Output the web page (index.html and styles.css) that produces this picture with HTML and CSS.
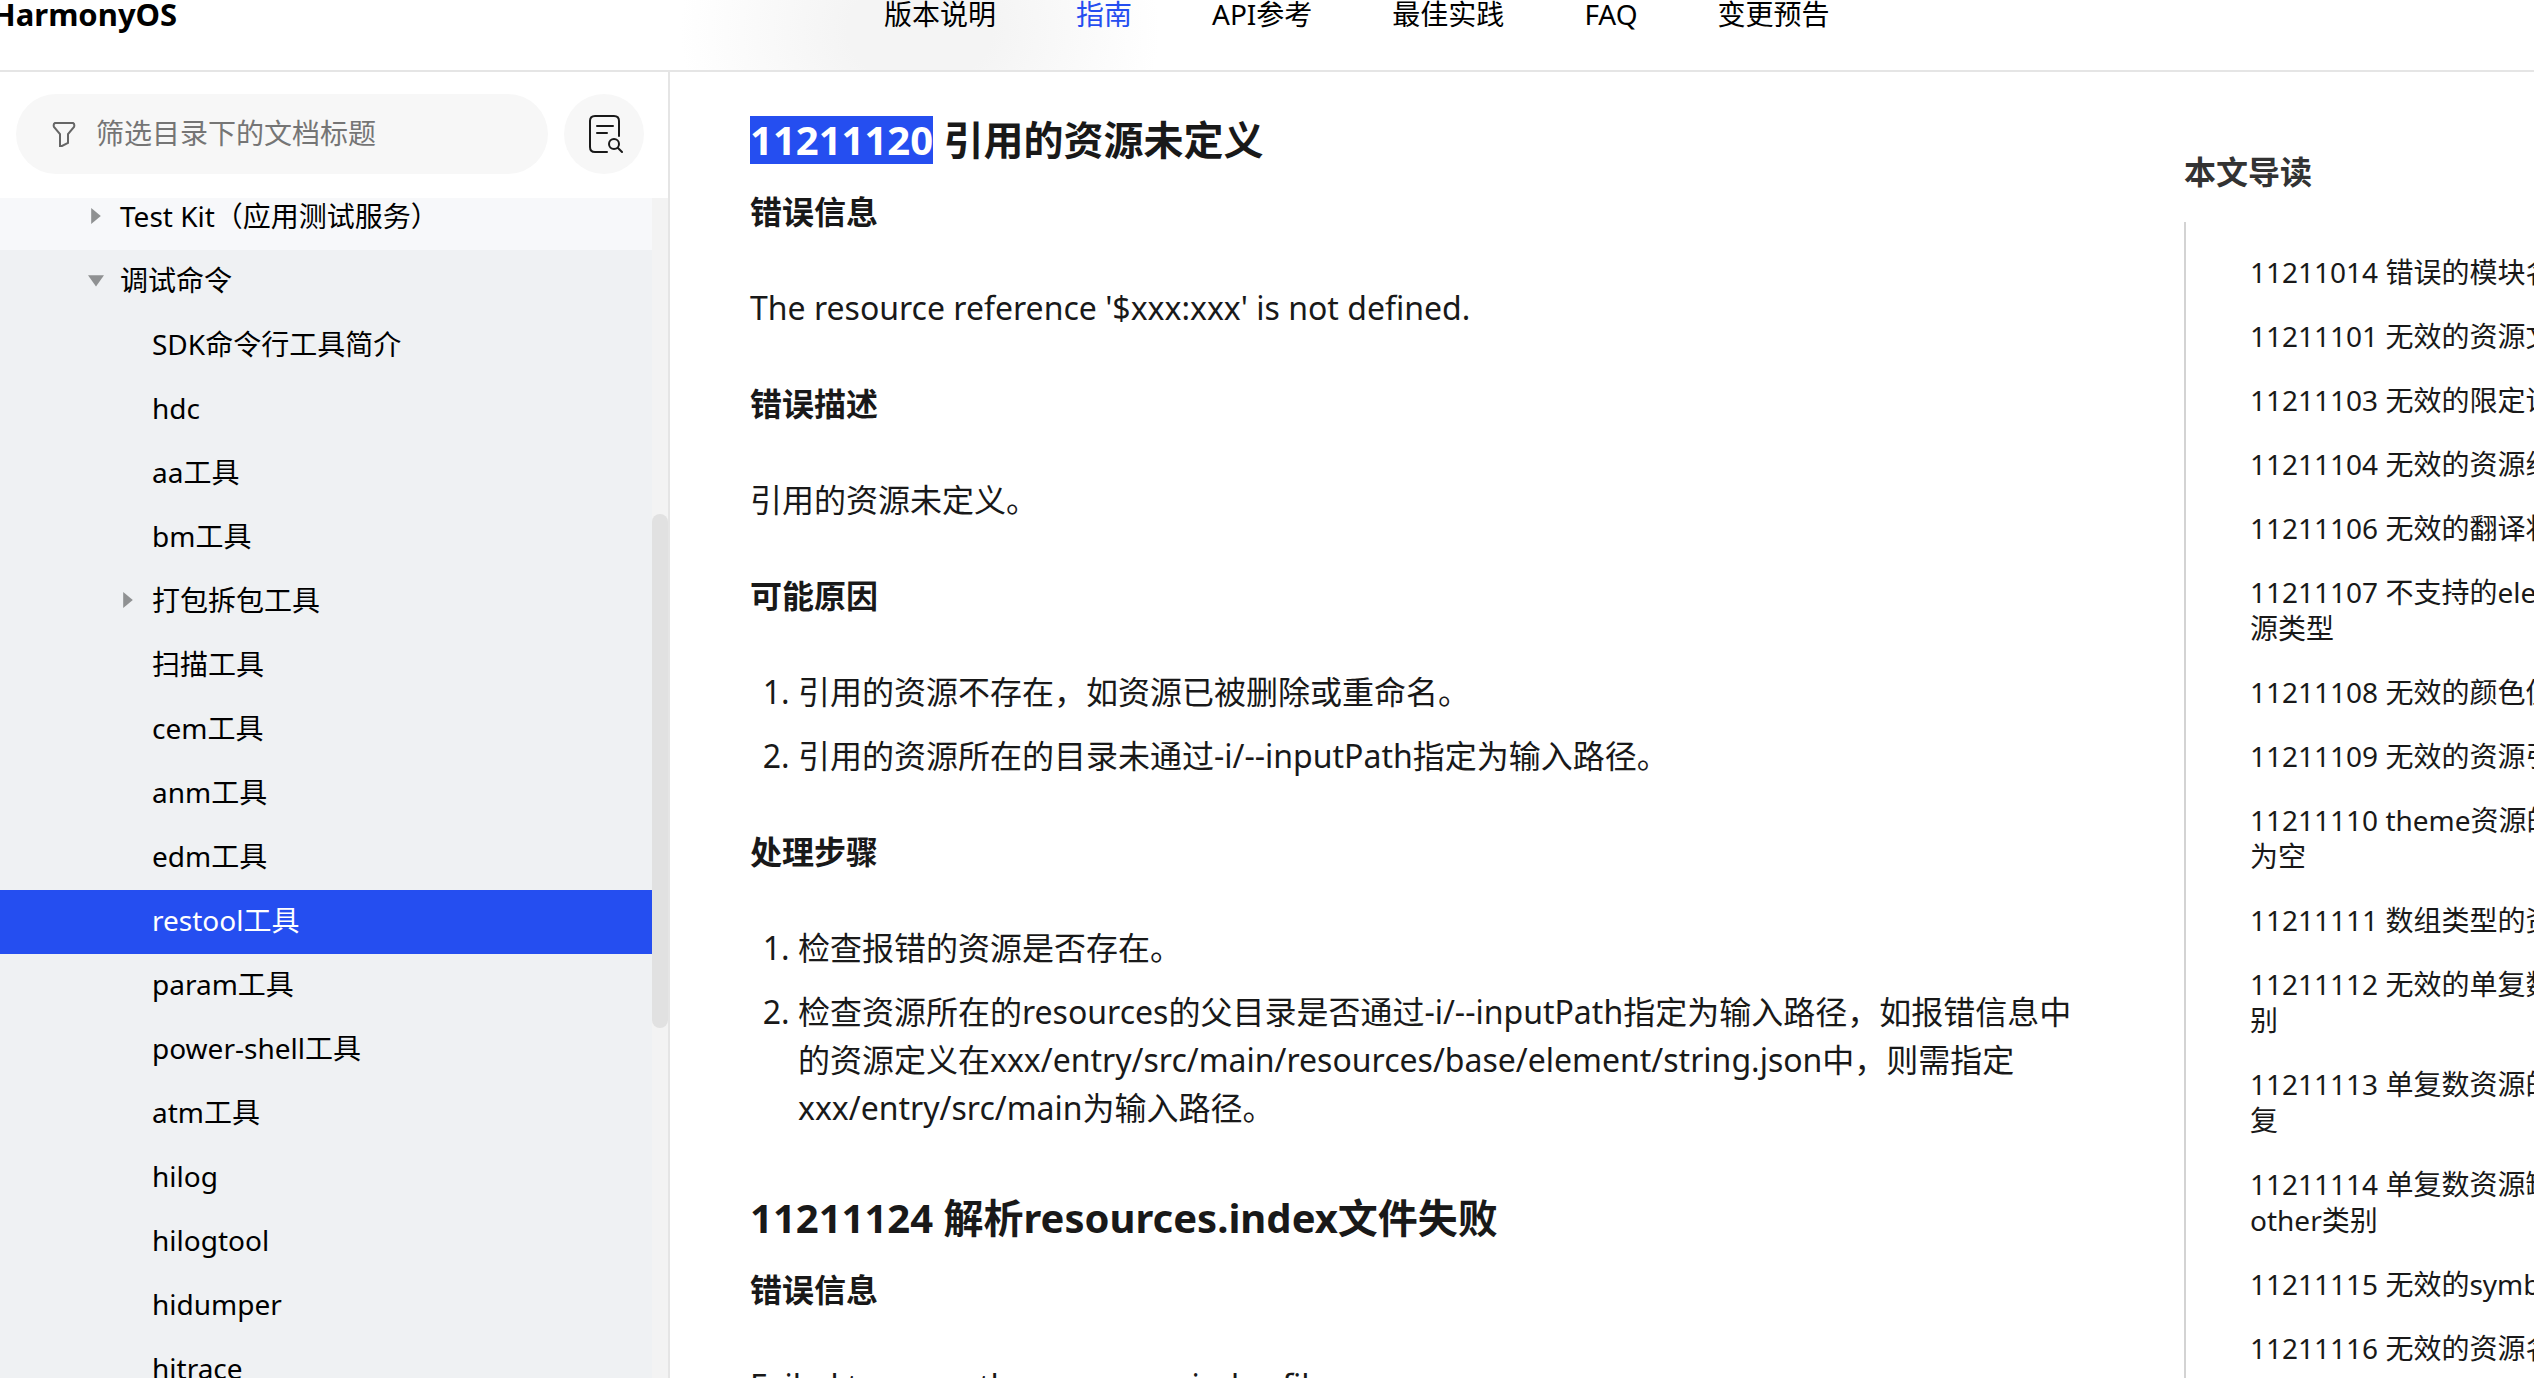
FILE: index.html
```html
<!DOCTYPE html>
<html lang="zh-CN">
<head>
<meta charset="utf-8">
<title>restool工具 - HarmonyOS</title>
<link rel="stylesheet" href="styles.css">
</head>
<body>
<header class="topbar">
  <a class="brand" href="#">HarmonyOS</a>
  <nav class="topnav">
    <a href="#">版本说明</a>
    <a class="active" href="#">指南</a>
    <a href="#">API参考</a>
    <a href="#">最佳实践</a>
    <a href="#">FAQ</a>
    <a href="#">变更预告</a>
  </nav>
</header>
<div class="layout">
  <aside class="sidebar">
    <div class="tools">
      <label class="filter">
        <svg class="funnel" viewBox="0 0 24 26" aria-hidden="true"><path d="M3 2h18q2 1 1 4l-6 7v9l-6 3h-2v-12l-6-7q-1-3 1-4z"/></svg>
        <input type="text" placeholder="筛选目录下的文档标题" aria-label="筛选目录下的文档标题">
      </label>
      <button class="doc-search" type="button" aria-label="搜索文档">
        <svg viewBox="0 0 36 40" aria-hidden="true"><path d="M20 38H8q-5 0-5-5V7q0-5 5-5h19q5 0 5 5v15M10 12h16M10 19h10"/><circle cx="27" cy="30" r="5"/><path d="M31 34l4 4"/></svg>
      </button>
    </div>
    <div class="tree-area">
      <ul class="tree">
        <li class="level-1 parent first"><span class="arrow right"></span><a href="#">Test Kit（应用测试服务）</a></li>
        <li class="level-1"><span class="arrow down"></span><a href="#">调试命令</a></li>
        <li><a href="#">SDK命令行工具简介</a></li>
        <li><a href="#">hdc</a></li>
        <li><a href="#">aa工具</a></li>
        <li><a href="#">bm工具</a></li>
        <li><span class="arrow right"></span><a href="#">打包拆包工具</a></li>
        <li><a href="#">扫描工具</a></li>
        <li><a href="#">cem工具</a></li>
        <li><a href="#">anm工具</a></li>
        <li><a href="#">edm工具</a></li>
        <li class="current"><a href="#">restool工具</a></li>
        <li><a href="#">param工具</a></li>
        <li><a href="#">power-shell工具</a></li>
        <li><a href="#">atm工具</a></li>
        <li><a href="#">hilog</a></li>
        <li><a href="#">hilogtool</a></li>
        <li><a href="#">hidumper</a></li>
        <li><a href="#">hitrace</a></li>
      </ul>
      <div class="track"><div class="thumb"></div></div>
    </div>
  </aside>
  <main class="article">
    <section>
      <h2><mark>11211120</mark> 引用的资源未定义</h2>
      <h3>错误信息</h3>
      <p>The resource reference '$xxx:xxx' is not defined.</p>
      <h3>错误描述</h3>
      <p>引用的资源未定义。</p>
      <h3>可能原因</h3>
      <ol>
        <li>引用的资源不存在，如资源已被删除或重命名。</li>
        <li>引用的资源所在的目录未通过-i/--inputPath指定为输入路径。</li>
      </ol>
      <h3>处理步骤</h3>
      <ol>
        <li>检查报错的资源是否存在。</li>
        <li>检查资源所在的resources的父目录是否通过-i/--inputPath指定为输入路径，如报错信息中的资源定义在xxx/entry/src/main/resources/base/element/string.json中，则需指定xxx/entry/src/main为输入路径。</li>
      </ol>
    </section>
    <section>
      <h2>11211124 解析resources.index文件失败</h2>
      <h3>错误信息</h3>
      <p>Failed to parse the resources.index file.</p>
    </section>
  </main>
  <aside class="toc">
    <h4>本文导读</h4>
    <ul>
      <li><a href="#">11211014 错误的模块名</a></li>
      <li><a href="#">11211101 无效的资源文</a></li>
      <li><a href="#">11211103 无效的限定词</a></li>
      <li><a href="#">11211104 无效的资源组</a></li>
      <li><a href="#">11211106 无效的翻译状</a></li>
      <li><a href="#">11211107 不支持的ele<br>源类型</a></li>
      <li><a href="#">11211108 无效的颜色值</a></li>
      <li><a href="#">11211109 无效的资源引</a></li>
      <li><a href="#">11211110 theme资源的<br>为空</a></li>
      <li><a href="#">11211111 数组类型的资</a></li>
      <li><a href="#">11211112 无效的单复数<br>别</a></li>
      <li><a href="#">11211113 单复数资源的<br>复</a></li>
      <li><a href="#">11211114 单复数资源缺<br>other类别</a></li>
      <li><a href="#">11211115 无效的symb</a></li>
      <li><a href="#">11211116 无效的资源名</a></li>
    </ul>
  </aside>
</div>
</body>
</html>
```
FILE: styles.css
```css
* { box-sizing: border-box; }
body {
  margin: 0;
  height: 100vh;
  display: flex;
  flex-direction: column;
  overflow: hidden;
  background: #fff;
  color: #191919;
  font: 28px/36px "Noto Sans", "Noto Sans CJK SC", sans-serif;
}
a { color: inherit; text-decoration: none; }
ul, ol { margin: 0; padding: 0; }
ul { list-style: none; }

.topbar {
  flex: none;
  height: 72px;
  display: flex;
  align-items: flex-start;
  border-bottom: 2px solid #e5e5e5;
  background: radial-gradient(ellipse 240px 180px at 920px 30px, #f4f4f4 30%, #fff 100%);
  color: #000;
  white-space: nowrap;
}
.brand { width: 892px; margin: -4px 0 0 -8px; font-size: 31px; font-weight: 700; }
.topnav { display: flex; gap: 80px; margin-top: -4px; }
.topnav .active { color: #254ef0; }

.layout { flex: 1; min-height: 0; display: flex; }
.sidebar {
  flex: none;
  width: 670px;
  display: flex;
  flex-direction: column;
  border-right: 2px solid #e5e5e5;
}
.tools { flex: none; display: flex; gap: 16px; padding: 22px 24px 24px 16px; }
.filter {
  flex: 1;
  height: 80px;
  display: flex;
  align-items: center;
  gap: 20px;
  padding: 0 36px;
  border-radius: 40px;
  background: #f7f7f7;
}
.funnel { flex: none; width: 24px; height: 26px; fill: none; stroke: #666; stroke-width: 2; }
.filter input {
  flex: 1;
  min-width: 0;
  padding: 0 0 2px;
  border: 0;
  outline: 0;
  background: none;
  color: #191919;
  font: inherit;
}
.filter input::placeholder { color: #757575; opacity: 1; }
.doc-search {
  width: 80px;
  height: 80px;
  display: grid;
  place-items: center;
  padding: 0 0 0 2px;
  border: 0;
  border-radius: 50%;
  background: #f7f7f7;
}
.doc-search svg { width: 36px; height: 40px; fill: none; stroke: #191919; stroke-width: 2; stroke-linecap: round; }

.tree-area { flex: 1; min-height: 0; display: flex; }
.tree { flex: 1; overflow: hidden; background: #eff1f3; color: #000; }
.tree li { height: 64px; display: flex; align-items: center; padding: 0 0 4px 120px; }
.tree li a { flex: 1; order: 2; margin-left: 32px; }
.tree li .arrow { order: 1; width: 16px; margin-right: -16px; }
.tree .level-1 { padding-left: 88px; }
.tree .first { height: 52px; padding-bottom: 16px; background: #f7f8fa; }
.tree .current { background: #254ef0; color: #fff; }
.arrow { height: 16px; background: #8f9192; }
.arrow.right { clip-path: polygon(20% 0, 80% 50%, 20% 100%); }
.arrow.down { clip-path: polygon(0 20%, 100% 20%, 50% 90%); }
.track { flex: none; width: 16px; padding-top: 316px; background: #f3f3f3; }
.thumb { height: 514px; border-radius: 8px; background: #e1e1e1; }

.article { flex: 1; min-width: 0; padding: 44px 100px 0 80px; overflow: hidden; font-size: 32px; line-height: 48px; }
.article h2 { margin: 0; font-size: 40px; line-height: 48px; font-weight: 700; }
.article h3 { margin: 0; font-size: 32px; line-height: 48px; font-weight: 700; }
.article h2 + h3 { margin-top: 24px; }
.article p { margin: 48px 0; }
.article ol { margin: 48px 0; padding-left: 48px; }
.article li + li { margin-top: 16px; }
.article section + section { margin-top: 62px; }
mark { display: inline-block; background: #254ef0; color: #fff; }

.toc {
  flex: none;
  width: 350px;
  display: flex;
  flex-direction: column;
  padding-top: 76px;
  overflow: hidden;
  white-space: nowrap;
}
.toc h4 { margin: 0; color: #333; font-size: 32px; line-height: 48px; font-weight: 700; }
.toc ul { flex: 1; margin-top: 26px; padding: 32px 0 0 64px; border-left: 2px solid #d3d3d3; }
.toc li { margin-bottom: 28px; }
```
